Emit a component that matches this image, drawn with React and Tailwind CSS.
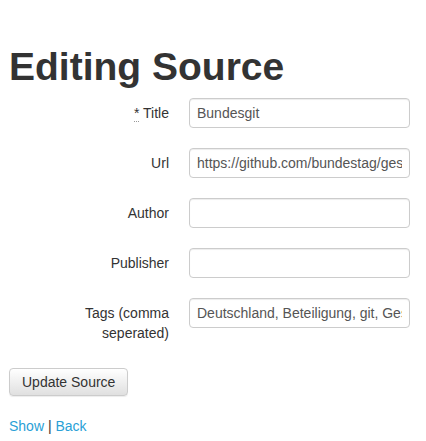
export default function App() {
  const fields = [
    { id: 'title', label: 'Title', required: true, value: 'Bundesgit' },
    { id: 'url', label: 'Url', value: 'https://github.com/bundestag/gesetze' },
    { id: 'author', label: 'Author', value: '' },
    { id: 'publisher', label: 'Publisher', value: '' },
    { id: 'tags', label: 'Tags (comma seperated)', value: 'Deutschland, Beteiligung, git, Gesetze' },
  ]

  return (
    <div className="min-h-screen bg-white px-[9px] text-[14px] text-[#333] font-['Liberation_Sans',Arial,sans-serif]">
      <h1 className="pt-[45px] text-[39px] leading-[43px] font-bold text-[#333]">Editing Source</h1>

      <form className="mt-[10px] flex flex-col gap-[20px]" onSubmit={(e) => e.preventDefault()}>
        {fields.map((f) => (
          <div key={f.id} className="flex items-start">
            <label htmlFor={f.id} className="w-[180px] shrink-0 pl-[65px] pr-[20px] pt-[5px] text-right leading-5 font-normal">
              {f.required && (
                <abbr title="required" className="no-underline border-b border-dotted border-[#999] cursor-help">*</abbr>
              )}
              {f.required && ' '}
              {f.label}
            </label>
            <input
              id={f.id}
              type="text"
              defaultValue={f.value}
              className="w-[221px] h-[30px] px-[7px] rounded-[4px] border border-[#ccc] bg-white text-[14px] text-[#555] shadow-[inset_0_1px_1px_rgba(0,0,0,0.075)] focus:outline-none"
            />
          </div>
        ))}

        <div className="mt-[5px]">
          <button
            type="submit"
            className="h-[28px] px-[12px] rounded-[4px] border border-[#ccc] bg-gradient-to-b from-white to-[#e0e0e0] text-[14px] text-[#333] shadow-[0_1px_1px_rgba(0,0,0,0.075)]"
          >
            Update Source
          </button>
        </div>
      </form>

      <p className="mt-[20px] leading-5">
        <a href="#" className="text-[#2a9fd6]">Show</a> | <a href="#" className="text-[#2a9fd6]">Back</a>
      </p>
    </div>
  )
}
